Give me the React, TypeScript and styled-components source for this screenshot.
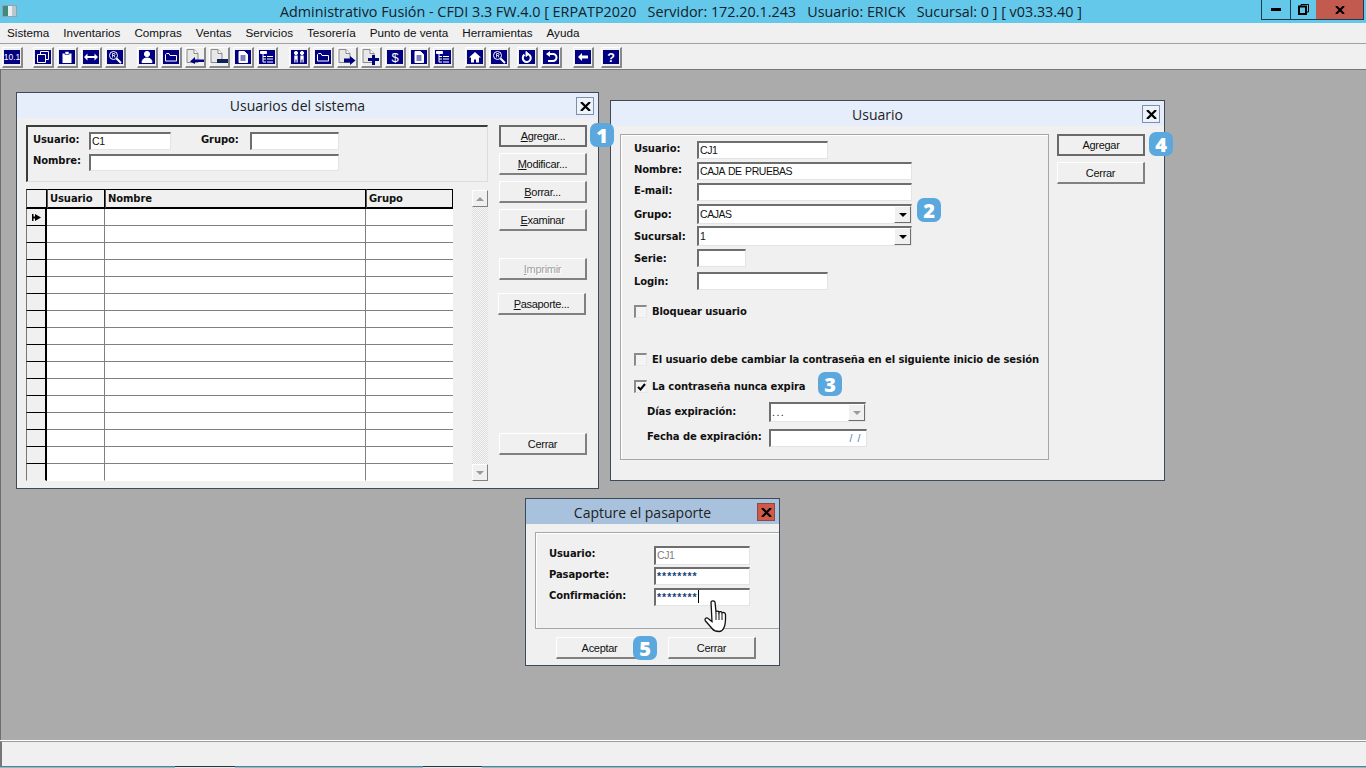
import React from "react"
import styled, { createGlobalStyle } from "styled-components"

const GlobalStyle = createGlobalStyle`
  * { box-sizing: border-box; }
  html, body { margin: 0; padding: 0; height: 100%; overflow: hidden; background: #ababab; }
  body { font-family: "Liberation Sans", Arial, sans-serif; font-size: 11px; color: #111; }
`

const NAVY = "#000080"

const Tile = ({ children }: { children: React.ReactNode }) => (
  <svg width="16" height="14" viewBox="0 0 16 14">
    <rect width="16" height="14" fill={NAVY} />
    <g fill="none" stroke="#fff" strokeWidth="1">{children}</g>
  </svg>
)

const PageTile = ({ children }: { children: React.ReactNode }) => (
  <svg width="18" height="16" viewBox="0 0 18 16">
    <path d="M1 0.5h7l4 4v9H1z" fill="#e8e8e8" stroke="#8a8a8a" />
    <path d="M8 0.5v4h4" fill="#fff" stroke="#8a8a8a" />
    {children}
  </svg>
)

const ICONS: Record<string, React.ReactNode> = {
  ten: <Tile><text x="8" y="10" textAnchor="middle" fontSize="8.5" fontFamily="Liberation Sans" fill="#fff" stroke="none">10.1</text></Tile>,
  copy: <Tile><path d="M5.500 1.500h8v8M2.500 4.500h8v8h-8z M5.500 1.500v3M13.500 9.500h-3" /></Tile>,
  clip: <Tile><path d="M3.500 3.500h9v9.500h-9z" fill="#fff" stroke="none" /><path d="M6 1.500h4v3H6z" fill="#fff" stroke={NAVY} strokeWidth=".6" /></Tile>,
  swap: <Tile><path d="M1 7l3.500-3.500v2.500h7V3.500L15 7l-3.500 3.500V8h-7v2.500z" fill="#fff" stroke="none" /></Tile>,
  find: <Tile><circle cx="6.500" cy="5.500" r="4" /><path d="M9.500 8.500l4.500 4.500" strokeWidth="2" /><path d="M5.500 7.500v-4h1.500a1 1 0 010 2H5.500M7 5.500l1 2" strokeWidth=".8" /></Tile>,
  user: <Tile><circle cx="8" cy="4" r="2.600" fill="#fff" /><path d="M3 12.500c0-3 2-4.500 5-4.500s5 1.500 5 4.500z" fill="#fff" /></Tile>,
  folder: <Tile><path d="M2.500 4.500v6.500h11V5.500H7L6 3.500H3.500z" /></Tile>,
  pageIn: <PageTile><path d="M18 10.500H9V8l-5 4.500L9 15v-2h9z" fill={NAVY} /></PageTile>,
  pageDash: <PageTile><path d="M7 10h11v4H7z" fill="#10205a" /></PageTile>,
  pageOut: <PageTile><path d="M6 9.500h6V7l5.500 4.500L12 16v-2.500H6z" fill={NAVY} /></PageTile>,
  pagePlus: <PageTile><path d="M10 6h3v3h4v3h-4v4h-3v-4H6V9h4z" fill={NAVY} /></PageTile>,
  doc: <Tile><path d="M4 1.500h5.500L12.500 4.500v8H4z" fill="#fff" /><path d="M5.500 6h5M5.500 8h5M5.500 10h5" stroke={NAVY} /></Tile>,
  tree: <Tile><path d="M1.500 1.500h6v2h-6z" fill="#fff" /><path d="M4 3.500v8.500M4 6.500h3M4 9h3M4 12h3M8 6.500h6M8 9h6M8 12h6" /></Tile>,
  people: <Tile><circle cx="5" cy="3" r="1.600" fill="#fff" /><circle cx="11" cy="3" r="1.600" fill="#fff" /><path d="M3.300 5.500h3.400v7H5.500v-3h-1v3H3.300zM9.300 5.500h3.400v7h-1.200v-3h-1v3H9.300z" fill="#fff" stroke="none" /></Tile>,
  dollar: <Tile><text x="8" y="12" textAnchor="middle" fontSize="13" fontFamily="Liberation Sans" fill="#fff" stroke="none">$</text></Tile>,
  home: <Tile><path d="M8 2L2 7.500h2V12.500h3V9.500h2v3h3V7.500h2z" fill="#fff" stroke="none" /></Tile>,
  redo: <Tile><path d="M9.500 4.300a4 4 0 11-4 .3" strokeWidth="2" /><path d="M7 1.500v5l3-2.500z" fill="#fff" /></Tile>,
  undo: <Tile><path d="M5 4h5a3 3 0 010 7H5" strokeWidth="2" /><path d="M7 1v6L3 4z" fill="#fff" stroke="none" /></Tile>,
  back: <Tile><path d="M3 7l4-4v2.500h6v3H7V11z" fill="#fff" stroke="none" /></Tile>,
  help: <Tile><text x="8" y="12" textAnchor="middle" fontSize="12.500" fontWeight="700" fontFamily="Liberation Sans" fill="#fff" stroke="none">?</text></Tile>,
}

const TOOL_GROUPS: { gap: number; icons: string[] }[] = [
  { gap: 2, icons: ["ten"] },
  { gap: 10, icons: ["copy", "clip", "swap", "find"] },
  { gap: 11, icons: ["user", "folder", "pageIn", "pageDash", "doc", "tree"] },
  { gap: 11, icons: ["people", "folder", "pageOut", "pagePlus", "dollar", "doc", "tree"] },
  { gap: 11, icons: ["home", "find"] },
  { gap: 7, icons: ["redo", "undo"] },
  { gap: 11, icons: ["back"] },
  { gap: 7, icons: ["help"] },
]

const MENU = ["Sistema", "Inventarios", "Compras", "Ventas", "Servicios", "Tesorería", "Punto de venta", "Herramientas", "Ayuda"]

const ROWS = Array.from({ length: 16 }, (_, i) => i)

export default function App() {
  return (
    <Screen>
      <GlobalStyle />
      <TitleBar>
        <AppIcon />
        <AppTitle>Administrativo Fusión - CFDI 3.3 FW.4.0 [ ERPATP2020   Servidor: 172.20.1.243   Usuario: ERICK   Sucursal: 0 ] [ v03.33.40 ]</AppTitle>
        <Caption>
          <CaptionButton $w={28}><svg width="10" height="3"><rect width="10" height="3" fill="#000" /></svg></CaptionButton>
          <CaptionButton $w={26}>
            <svg width="11" height="11" viewBox="0 0 11 11"><path d="M3 2V.5h7.500V8H8.500" fill="none" stroke="#000" /><rect x="1" y="2.500" width="7" height="7.500" fill="none" stroke="#000" strokeWidth="2" /></svg>
          </CaptionButton>
          <CaptionButton $w={47} $close>
            <svg width="10" height="8" viewBox="0 0 10 8"><path d="M1 0l4 4 4-4M1 8l4-4 4 4" fill="none" stroke="#000" strokeWidth="2" /></svg>
          </CaptionButton>
        </Caption>
      </TitleBar>

      <MenuBar>
        {MENU.map(m => <MenuItem key={m}>{m}</MenuItem>)}
      </MenuBar>

      <Toolbar>
        {TOOL_GROUPS.map((g, i) => (
          <ToolGroup key={i} $gap={g.gap}>
            {g.icons.map((name, j) => <ToolButton key={j}>{ICONS[name]}</ToolButton>)}
          </ToolGroup>
        ))}
      </Toolbar>

      <Desktop>
        <UsersWindow>
          <WindowTitle>
            <WindowCaption>Usuarios del sistema</WindowCaption>
            <CloseBox><CloseGlyph /></CloseBox>
          </WindowTitle>
          <UsersBody>
            <div>
              <FilterPanel>
                <FilterRow>
                  <FilterLabel>Usuario:</FilterLabel>
                  <Field $w={82} $h={18}>C1</Field>
                  <GroupLabel>Grupo:</GroupLabel>
                  <Field $w={89} $h={18} />
                </FilterRow>
                <FilterRow $mt={4}>
                  <FilterLabel>Nombre:</FilterLabel>
                  <Field $w={250} $h={17} />
                </FilterRow>
              </FilterPanel>
              <GridArea>
                <DataGrid>
                  <GridHeader>
                    <HeaderCell />
                    <HeaderCell>Usuario</HeaderCell>
                    <HeaderCell>Nombre</HeaderCell>
                    <HeaderCell>Grupo</HeaderCell>
                  </GridHeader>
                  {ROWS.map(i => (
                    <GridRow key={i}>
                      <RowMarker>
                        {i === 0 && <svg width="9" height="7" viewBox="0 0 9 7"><path d="M0 0h1.500v2.500H3V0l6 3.500L3 7V4.500H1.500V7H0z" fill="#000" /></svg>}
                      </RowMarker>
                      <RowCell />
                      <RowCell />
                      <RowCell />
                    </GridRow>
                  ))}
                </DataGrid>
                <ScrollBar>
                  <ScrollButton><Arrow $up $muted /></ScrollButton>
                  <ScrollButton><Arrow $muted /></ScrollButton>
                </ScrollBar>
              </GridArea>
            </div>
            <ButtonColumn>
              <Button $default><u>A</u>gregar...</Button>
              <Button $mt={6}><u>M</u>odificar...</Button>
              <Button $mt={6}><u>B</u>orrar...</Button>
              <Button $mt={6}><u>E</u>xaminar</Button>
              <Button $mt={27} $disabled><u>I</u>mprimir</Button>
              <Button $mt={13} $shift={-1}><u>P</u>asaporte...</Button>
              <Button $mt={118}>Cerrar</Button>
            </ButtonColumn>
          </UsersBody>
        </UsersWindow>

        <UserWindow>
          <WindowTitle>
            <WindowCaption $lh={27}>Usuario</WindowCaption>
            <CloseBox><CloseGlyph /></CloseBox>
          </WindowTitle>
          <UserBody>
            <UserPanel>
              <FormRow>
                <FormLabel $lift={4}>Usuario:</FormLabel>
                <Field $w={131} $h={18}>CJ1</Field>
              </FormRow>
              <FormRow $mt={3}>
                <FormLabel $lift={4}>Nombre:</FormLabel>
                <Field $w={215} $h={18}>CAJA DE PRUEBAS</Field>
              </FormRow>
              <FormRow $mt={3}>
                <FormLabel $lift={4}>E-mail:</FormLabel>
                <Field $w={215} $h={18} />
              </FormRow>
              <FormRow $mt={3}>
                <FormLabel>Grupo:</FormLabel>
                <Field $w={215} $h={20}>CAJAS<ComboButton><Arrow /></ComboButton></Field>
              </FormRow>
              <FormRow $mt={2}>
                <FormLabel>Sucursal:</FormLabel>
                <Field $w={215} $h={20}>1<ComboButton><Arrow /></ComboButton></Field>
              </FormRow>
              <FormRow $mt={3}>
                <FormLabel>Serie:</FormLabel>
                <Field $w={49} $h={18} />
              </FormRow>
              <FormRow $mt={5}>
                <FormLabel>Login:</FormLabel>
                <Field $w={131} $h={18} />
              </FormRow>
              <CheckRow $mt={15}>
                <CheckBox />
                <CheckLabel>Bloquear usuario</CheckLabel>
              </CheckRow>
              <CheckRow $mt={35}>
                <CheckBox />
                <CheckLabel>El usuario debe cambiar la contraseña en el siguiente inicio de sesión</CheckLabel>
              </CheckRow>
              <CheckRow $mt={14}>
                <CheckBox>
                  <svg width="9" height="8" viewBox="0 0 9 8"><path d="M1 4l2.500 2.500L8 1" fill="none" stroke="#000" strokeWidth="2" /></svg>
                </CheckBox>
                <CheckLabel>La contraseña nunca expira</CheckLabel>
              </CheckRow>
              <ExpiryRow $mt={9}>
                <ExpiryLabel $lift={2}>Días expiración:</ExpiryLabel>
                <Field $w={97} $h={20}><Dots>...</Dots><ComboButton><Arrow $muted /></ComboButton></Field>
              </ExpiryRow>
              <ExpiryRow $mt={7}>
                <ExpiryLabel $lift={4}>Fecha de expiración:</ExpiryLabel>
                <DateField $w={98} $h={18}>/ /</DateField>
              </ExpiryRow>
            </UserPanel>
            <SideButtons>
              <Button $default>Agregar</Button>
              <Button $mt={6}>Cerrar</Button>
            </SideButtons>
          </UserBody>
        </UserWindow>

        <PassportWindow>
          <PassportTitle>
            <WindowCaption $lh={27}>Capture el pasaporte</WindowCaption>
            <RedClose><CloseGlyph /></RedClose>
          </PassportTitle>
          <PassportPanel>
            <FormRow>
              <PassportLabel>Usuario:</PassportLabel>
              <Field $w={96} $h={19} $muted>CJ1</Field>
            </FormRow>
            <FormRow $mt={2}>
              <PassportLabel>Pasaporte:</PassportLabel>
              <Field $w={96} $h={18} $secret>********</Field>
            </FormRow>
            <FormRow $mt={3}>
              <PassportLabel>Confirmación:</PassportLabel>
              <Field $w={96} $h={18} $secret>********<TextCaret /></Field>
            </FormRow>
          </PassportPanel>
          <PassportFooter>
            <Button>Aceptar</Button>
            <Button>Cerrar</Button>
          </PassportFooter>
        </PassportWindow>

        <Badge $x={590} $y={54}>1</Badge>
        <Badge $x={917} $y={129}>2</Badge>
        <Badge $x={818} $y={303}>3</Badge>
        <Badge $x={1149} $y={63}>4</Badge>
        <Badge $x={633} $y={567}>5</Badge>

        <HandCursor width="27" height="33" viewBox="0 0 27 33">
          <path d="M8 2c1-1.500 3-1.500 4 0l1 10c1-1.500 3-1 3 .5 1-1.500 3-1 3 .5 1-1 3.500-.5 3.500 1.500 0 5 .5 9-1.500 13-1 2.500-2.500 4-5 4-3 0-5-.5-6.500-2.500L2.500 21c-1.500-2 .5-3.500 2-3l4.500 3.500z" fill="#fff" stroke="#111" strokeWidth="1.300" />
          <path d="M13 13v7M16 13v7M19 14v6" stroke="#111" fill="none" strokeWidth="1" />
        </HandCursor>
      </Desktop>

      <StatusBar>
        <StatusFill />
        <TaskStrip>
          <TaskSegment $w={175} />
          <TaskSegment $w={60} $active />
          <TaskSegment $w={188} />
          <TaskSegment $w={59} $active />
          <TaskSegment $w={884} />
        </TaskStrip>
      </StatusBar>
    </Screen>
  )
}

const CloseGlyph = () => (
  <svg width="11" height="9" viewBox="0 0 11 9"><path d="M1 0l4.500 4.500L10 0M1 9l4.500-4.500L10 9" fill="none" stroke="#000" strokeWidth="2.200" /></svg>
)

const Screen = styled.div`
  display: flex;
  flex-direction: column;
  width: 1366px;
  height: 768px;
  overflow: hidden;
`

const TitleBar = styled.div`
  position: relative;
  flex: 0 0 23px;
  background: #64c8ea;
`

const AppIcon = styled.div`
  position: absolute;
  left: 2px;
  top: 5px;
  width: 15px;
  height: 12px;
  border: 1px solid #8fa3ad;
  background: linear-gradient(90deg, #3f8a7a 0 40%, #e8eef0 40% 70%, #b9c6cc 70%);
`

const AppTitle = styled.div`
  height: 23px;
  padding-left: 280px;
  font-family: "Open Sans", sans-serif;
  font-size: 14.35px;
  line-height: 24px;
  color: #14202a;
  white-space: pre;
`

const Caption = styled.div`
  position: absolute;
  right: 2px;
  top: 0;
  display: flex;
  height: 20px;
  border: 1px solid #1d3b4b;
  border-top: none;
`

const CaptionButton = styled.div<{ $w: number; $close?: boolean }>`
  display: flex;
  align-items: center;
  justify-content: center;
  width: ${p => p.$w}px;
  background: ${p => (p.$close ? "#c25a50" : "transparent")};
  border-left: ${p => (p.$w === 26 ? "1px solid #1d3b4b" : "none")};
`

const MenuBar = styled.div`
  flex: 0 0 21px;
  display: flex;
  gap: 14px;
  padding-left: 7px;
  background: #f0f0f0;
  border-bottom: 1px solid #a0a0a0;
  font-size: 11.7px;
  line-height: 20px;
  color: #111;
`

const MenuItem = styled.span``

const Toolbar = styled.div`
  flex: 0 0 25px;
  display: flex;
  padding-top: 3px;
  background: #f0f0f0;
`

const ToolGroup = styled.div<{ $gap: number }>`
  display: flex;
  gap: 3px;
  margin-left: ${p => p.$gap}px;
`

const ToolButton = styled.div`
  display: flex;
  align-items: center;
  justify-content: center;
  width: 21px;
  height: 21px;
  background: #f0f0f0;
  border-top: 1px solid #fff;
  border-left: 1px solid #fff;
  border-right: 2px solid #8a8a8a;
  border-bottom: 2px solid #8a8a8a;
`

const Desktop = styled.div`
  position: relative;
  flex: 1;
  background: #ababab;
  border-top: 1px solid #777;
  border-left: 1px solid #6e6e6e;
`

const Window = styled.div`
  position: absolute;
  background: #f0f0f0;
  border: 1px solid #3f4a58;
`

const UsersWindow = styled(Window)`
  left: 15px;
  top: 22px;
  width: 583px;
  height: 397px;
`

const UserWindow = styled(Window)`
  left: 609px;
  top: 30px;
  width: 555px;
  height: 381px;
`

const PassportWindow = styled(Window)`
  left: 524px;
  top: 428px;
  width: 255px;
  height: 168px;
`

const WindowTitle = styled.div`
  position: relative;
  height: 25px;
  padding-right: 20px;
  background: #e6eefb;
  text-align: center;
`

const WindowCaption = styled.span<{ $lh?: number }>`
  font-family: "Open Sans", sans-serif;
  font-size: 14px;
  line-height: ${p => p.$lh ?? 25}px;
  color: #222;
`

const CloseBox = styled.div`
  position: absolute;
  right: 4px;
  top: 4px;
  display: flex;
  align-items: center;
  justify-content: center;
  width: 18px;
  height: 18px;
  border: 1px solid #7f8fa8;
  background: #eef2fa;
`

const UsersBody = styled.div`
  display: flex;
  padding: 7px 0 0 9px;
`

const FilterPanel = styled.div`
  width: 462px;
  height: 57px;
  padding: 5px 0 0 5px;
  border: 2px solid;
  border-color: #3c3c3c #dcdcdc #dcdcdc #3c3c3c;
  border-right-width: 1px;
  border-bottom-width: 1px;
`

const FilterRow = styled.div<{ $mt?: number }>`
  display: flex;
  align-items: center;
  margin-top: ${p => p.$mt ?? 0}px;
`

const BoldText = styled.span<{ $lift?: number }>`
  margin-bottom: ${p => p.$lift ?? 0}px;
  font-family: "DejaVu Sans", sans-serif;
  font-weight: 700;
  font-size: 10px;
  letter-spacing: -0.1px;
  color: #111;
  white-space: nowrap;
`

const FilterLabel = styled(BoldText)`
  width: 56px;
  margin-bottom: 4px;
`

const GroupLabel = styled(BoldText)`
  width: 49px;
  margin-left: 30px;
  margin-bottom: 4px;
`

const Field = styled.div<{ $w: number; $h: number; $muted?: boolean; $secret?: boolean }>`
  position: relative;
  flex: none;
  display: flex;
  align-items: center;
  width: ${p => p.$w}px;
  height: ${p => p.$h}px;
  padding: 0 0 2px 1px;
  background: #fff;
  border-style: solid;
  border-width: 2px 1px 1px 2px;
  border-color: #6e6e6e #e4e4e4 #e4e4e4 #6e6e6e;
  font-size: 10.5px;
  font-weight: ${p => (p.$secret ? 700 : 400)};
  color: ${p => (p.$muted ? "#808080" : p.$secret ? "#123f7a" : "#111")};
  letter-spacing: ${p => (p.$secret ? "1px" : "-0.45px")};
  word-spacing: 1px;
  white-space: pre;
`

const Dots = styled.span`
  letter-spacing: 1.5px;
`

const GridArea = styled.div`
  display: flex;
  margin-top: 7px;
`

const DataGrid = styled.div`
  width: 427px;
  background: #fff;
`

const COLS = "21px 58px 261px 87px"

const GridHeader = styled.div`
  display: grid;
  grid-template-columns: ${COLS};
  height: 20px;
`

const HeaderCell = styled(BoldText)`
  padding: 3px 0 0 2px;
  background: #f0f0f0;
  border-top: 1px solid #000;
  border-left: 1px solid #555;
  border-bottom: 2px solid #000;
  border-right: 1px solid #000;
`

const GridRow = styled.div`
  display: grid;
  grid-template-columns: ${COLS};
  height: 17px;
  &:last-child > * { border-bottom-color: transparent; }
`

const RowMarker = styled.div`
  display: flex;
  align-items: center;
  padding-left: 5px;
  background: #f0f0f0;
  border-left: 1px solid #777;
  border-right: 2px solid #000;
  border-bottom: 1px solid #000;
`

const RowCell = styled.div`
  border-right: 1px solid #808080;
  border-bottom: 1px solid #808080;
  &:last-child { border-right: none; }
`

const ScrollBar = styled.div`
  display: flex;
  flex-direction: column;
  justify-content: space-between;
  width: 16px;
  height: 291px;
  margin: 1px 0 0 19px;
  background: repeating-conic-gradient(#dedede 0 25%, #f6f6f6 0 50%) 0 0 / 2px 2px;
`

const ScrollButton = styled.div`
  display: flex;
  align-items: center;
  justify-content: center;
  height: 17px;
  background: #f0f0f0;
  border-top: 1px solid #fff;
  border-left: 1px solid #fff;
  border-right: 1px solid #808080;
  border-bottom: 1px solid #808080;
`

const Arrow = styled.span<{ $up?: boolean; $muted?: boolean }>`
  width: 0;
  height: 0;
  border-left: 4px solid transparent;
  border-right: 4px solid transparent;
  ${p => (p.$up ? "border-bottom" : "border-top")}: 4px solid ${p => (p.$muted ? "#9a9a9a" : "#000")};
`

const ButtonColumn = styled.div`
  display: flex;
  flex-direction: column;
  width: 88px;
  margin-left: 11px;
`

const SideButtons = styled(ButtonColumn)`
  margin-left: 8px;
`

const Button = styled.div<{ $default?: boolean; $disabled?: boolean; $mt?: number; $shift?: number }>`
  display: flex;
  align-items: center;
  justify-content: center;
  flex: none;
  width: 88px;
  height: 22px;
  margin-top: ${p => p.$mt ?? 0}px;
  margin-left: ${p => p.$shift ?? 0}px;
  background: #f0f0f0;
  font-size: 11px;
  letter-spacing: -0.3px;
  color: ${p => (p.$disabled ? "#a0a0a0" : "#111")};
  text-shadow: ${p => (p.$disabled ? "1px 1px #fff" : "none")};
  border-style: solid;
  border-width: ${p => (p.$default ? "2px" : "1px 2px 2px 1px")};
  border-color: ${p => (p.$default ? "#6a6a6a" : "#fff #808080 #808080 #fff")};
`

const UserBody = styled.div`
  display: flex;
  padding: 8px 0 0 9px;
`

const UserPanel = styled.div`
  width: 429px;
  height: 326px;
  padding: 6px 0 0 13px;
  border: 1px solid #a6a6a6;
  box-shadow: inset 1px 1px #fff;
`

const FormRow = styled.div<{ $mt?: number }>`
  display: flex;
  align-items: center;
  margin-top: ${p => p.$mt ?? 0}px;
`

const FormLabel = styled(BoldText)`
  width: 63px;
`

const ComboButton = styled.div`
  position: absolute;
  right: 0;
  top: 0;
  bottom: 0;
  display: flex;
  align-items: center;
  justify-content: center;
  width: 17px;
  background: #f0f0f0;
  border-top: 1px solid #fff;
  border-left: 1px solid #fff;
  border-right: 1px solid #6e6e6e;
  border-bottom: 1px solid #6e6e6e;
`

const CheckRow = styled.div<{ $mt: number }>`
  display: flex;
  align-items: center;
  height: 13px;
  margin-top: ${p => p.$mt}px;
`

const CheckBox = styled.div`
  display: flex;
  align-items: center;
  justify-content: center;
  width: 13px;
  height: 13px;
  background: #f4f4f4;
  border-style: solid;
  border-width: 2px 1px 1px 2px;
  border-color: #8a8a8a #e8e8e8 #e8e8e8 #8a8a8a;
`

const CheckLabel = styled(BoldText)`
  margin-left: 5px;
`

const ExpiryRow = styled.div<{ $mt: number }>`
  display: flex;
  align-items: center;
  margin-top: ${p => p.$mt}px;
  padding-left: 13px;
`

const ExpiryLabel = styled(BoldText)`
  width: 122px;
`

const DateField = styled(Field)`
  justify-content: flex-end;
  padding-right: 6px;
  color: #4a7fb8;
  word-spacing: 3px;
`

const PassportTitle = styled(WindowTitle)`
  background: #a8c2de;
`

const RedClose = styled(CloseBox)`
  background: #cf5a4a;
  border-color: #8a4b42;
`

const PassportPanel = styled.div`
  width: 244px;
  height: 97px;
  margin: 8px 0 0 9px;
  padding: 13px 0 0 13px;
  border: 1px solid #a6a6a6;
  border-right: none;
  box-shadow: inset 1px 1px #fff;
`

const PassportLabel = styled(BoldText)`
  width: 105px;
  margin-bottom: 4px;
`

const TextCaret = styled.span`
  width: 1px;
  height: 13px;
  background: #000;
`

const PassportFooter = styled.div`
  display: flex;
  gap: 24px;
  margin-top: 8px;
  padding-left: 30px;
`

const Badge = styled.div<{ $x: number; $y: number }>`
  position: absolute;
  left: ${p => p.$x - 1}px;
  top: ${p => p.$y - 1}px;
  display: flex;
  align-items: center;
  justify-content: center;
  width: 24px;
  height: 24px;
  border-radius: 7px;
  background: #5ba8de;
  color: #fff;
  font-family: "Open Sans", sans-serif;
  font-weight: 800;
  font-size: 20px;
`

const HandCursor = styled.svg`
  position: absolute;
  left: 702px;
  top: 530px;
`

const StatusBar = styled.div`
  flex: 0 0 28px;
  display: flex;
  flex-direction: column;
  border-top: 1px solid #fff;
  background: #f0f0f0;
`

const StatusFill = styled.div`
  flex: 1;
  border-top: 1px solid #9a9a9a;
  border-left: 2px solid #777;
`

const TaskStrip = styled.div`
  display: flex;
  height: 2px;
  flex: none;
`

const TaskSegment = styled.div<{ $w: number; $active?: boolean }>`
  width: ${p => p.$w}px;
  background: ${p => (p.$active ? "#d6edf7" : "#64c8ea")};
  border-top: 1px solid ${p => (p.$active ? "#333" : "#777")};
`
